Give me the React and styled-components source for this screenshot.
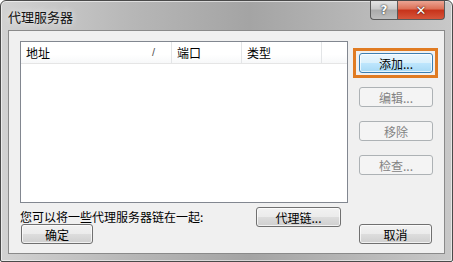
import React from "react";
import styled, { createGlobalStyle, css } from "styled-components";

const Global = createGlobalStyle`
  html, body {
    margin: 0;
    padding: 0;
    background: #ffffff;
  }
  body {
    font-family: "Noto Sans CJK SC", "Liberation Sans", sans-serif;
    font-size: 12px;
    color: #000;
  }
`;

const Window = styled.div`
  width: 453px;
  height: 262px;
  box-sizing: border-box;
  display: flex;
  flex-direction: column;
  border: 1px solid #4a4a4a;
  border-radius: 6px 6px 2px 2px;
  background: linear-gradient(90deg, #d2d2d2 0%, #b6b6b6 30%, #a4a4a4 55%, #b8b8b8 80%, #c8c8c8 100%);
  box-shadow: inset 0 0 0 1px rgba(255, 255, 255, 0.55);
  padding: 0 7px 7px 7px;
  overflow: hidden;
`;

const TitleBar = styled.div`
  height: 29px;
  display: flex;
  align-items: flex-start;
  justify-content: space-between;
`;

const Title = styled.div`
  padding-top: 6px;
  font-size: 13px;
  color: #111;
  text-shadow: 0 0 6px rgba(255, 255, 255, 0.9);
`;

const Caption = styled.div`
  display: flex;
`;

const CapButton = styled.div`
  height: 19px;
  box-sizing: border-box;
  display: flex;
  align-items: center;
  justify-content: center;
  border: 1px solid #5a5a5a;
  border-top: none;
  font-family: "DejaVu Sans", sans-serif;
  font-weight: bold;
  color: #fff;
  ${(p) =>
    p.$close
      ? css`
          width: 48px;
          border-radius: 0 0 4px 0;
          background: linear-gradient(180deg, #eba493 0%, #dc6f55 45%, #c7321a 50%, #d6553a 100%);
          font-size: 13px;
          text-shadow: 0 0 2px #4a1408, 0 0 1px #4a1408;
        `
      : css`
          width: 27px;
          border-right: none;
          border-radius: 0 0 0 4px;
          background: linear-gradient(180deg, #e4e4e4 0%, #c9c9c9 45%, #aaaaaa 50%, #bdbdbd 100%);
          font-size: 12px;
          text-shadow: 0 0 2px #333, 0 0 1px #333;
        `}
`;

const Client = styled.div`
  flex: 1;
  background: #f0f0f0;
  border: 1px solid #8a8a8a;
  padding: 10px 11px 9px 11px;
  display: flex;
  flex-direction: column;
`;

const Top = styled.div`
  display: flex;
  gap: 11px;
`;

const ListBox = styled.div`
  width: 328px;
  height: 162px;
  box-sizing: border-box;
  border: 1px solid #828790;
  background: #fff;
`;

const Header = styled.div`
  display: flex;
  height: 21px;
  border-bottom: 1px solid #e5e5e5;
  background: linear-gradient(180deg, #ffffff 0%, #ffffff 60%, #f7f8f9 100%);
`;

const Col = styled.div`
  width: ${(p) => p.$w}px;
  box-sizing: border-box;
  display: flex;
  align-items: center;
  justify-content: space-between;
  padding: 0 5px;
  border-right: 1px solid #e3e5e7;
  line-height: 21px;
`;

const Sort = styled.span`
  color: #555;
  font-family: "Liberation Sans", sans-serif;
  font-size: 11px;
  margin-right: 11px;
`;

const Side = styled.div`
  display: flex;
  flex-direction: column;
  gap: 14px;
  padding-top: 12px;
`;

const Focus = styled.div`
  margin: -5px -5px -5px -6px;
  border: 3px solid #e07b22;
  padding: 2px 2px 2px 3px;
`;

const Button = styled.div`
  width: ${(p) => p.$w || 74}px;
  height: 20px;
  box-sizing: border-box;
  display: flex;
  align-items: center;
  justify-content: center;
  border: 1px solid #707070;
  border-radius: 3px;
  background: linear-gradient(180deg, #f2f2f2 0%, #ebebeb 50%, #dddddd 51%, #cfcfcf 100%);
  box-shadow: inset 0 0 0 1px rgba(255, 255, 255, 0.7);
  font-size: 12px;
  color: #000;
  ${(p) =>
    p.$default &&
    css`
      border-color: #3c7fb1;
      background: linear-gradient(180deg, #eaf6fd 0%, #d9f0fc 50%, #bee6fd 51%, #a7d9f5 100%);
    `}
  ${(p) =>
    p.$disabled &&
    css`
      border-color: #adb2b5;
      background: #f4f4f4;
      color: #838383;
      box-shadow: none;
    `}
`;

const Bottom = styled.div`
  margin-top: 4px;
  display: grid;
  grid-template-columns: 1fr auto;
  grid-template-rows: 17px 19px;
  align-items: start;
`;

const Note = styled.div`
  padding-top: 1px;
  line-height: 17px;
`;

const ChainCell = styled.div`
  margin-right: 92px;
`;

const OkCell = styled.div`
  padding-left: 1px;
`;

const CancelCell = styled.div`
  justify-self: end;
  padding-right: 1px;
`;

export default function App() {
  return (
    <>
      <Global />
      <Window>
        <TitleBar>
          <Title>代理服务器</Title>
          <Caption>
            <CapButton>?</CapButton>
            <CapButton $close>✕</CapButton>
          </Caption>
        </TitleBar>
        <Client>
          <Top>
            <ListBox>
              <Header>
                <Col $w={151}>
                  <span>地址</span>
                  <Sort>/</Sort>
                </Col>
                <Col $w={70}>端口</Col>
                <Col $w={80}>类型</Col>
              </Header>
            </ListBox>
            <Side>
              <Focus>
                <Button $default>添加...</Button>
              </Focus>
              <Button $disabled>编辑...</Button>
              <Button $disabled>移除</Button>
              <Button $disabled>检查...</Button>
            </Side>
          </Top>
          <Bottom>
            <Note>您可以将一些代理服务器链在一起:</Note>
            <ChainCell>
              <Button $w={85}>代理链...</Button>
            </ChainCell>
            <OkCell>
              <Button $w={72}>确定</Button>
            </OkCell>
            <CancelCell>
              <Button $w={73}>取消</Button>
            </CancelCell>
          </Bottom>
        </Client>
      </Window>
    </>
  );
}
